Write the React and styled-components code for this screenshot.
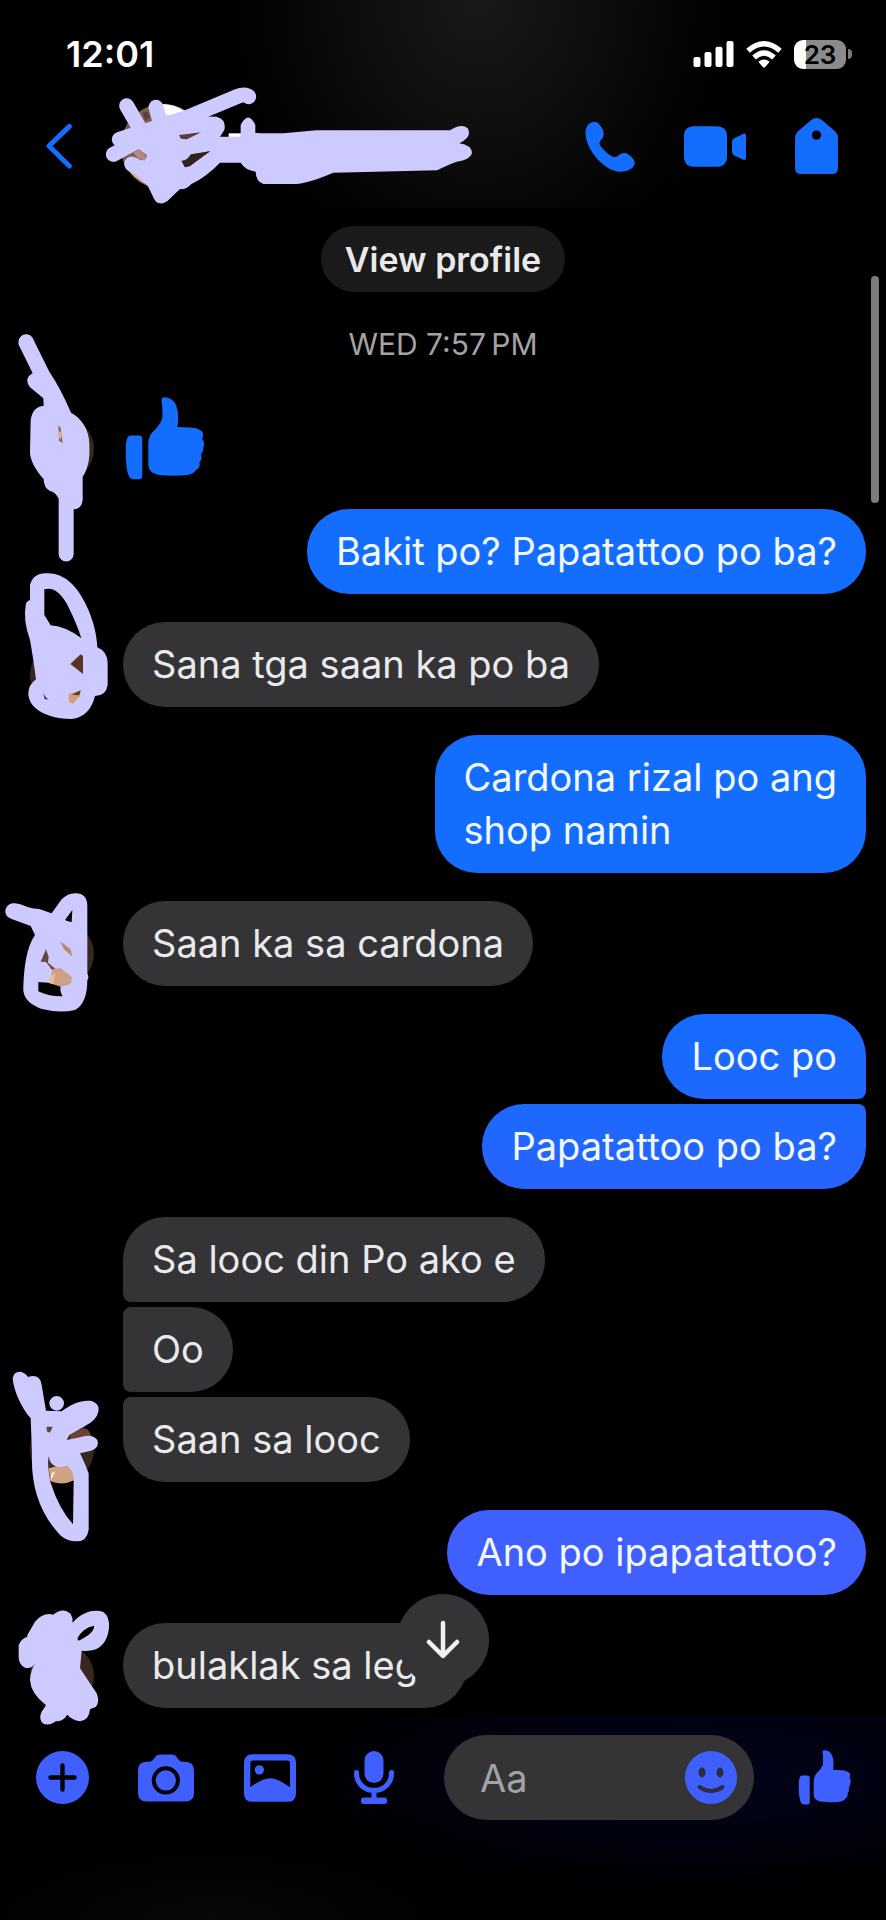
import React from "react";
import styled, { createGlobalStyle, css } from "styled-components";

const GlobalStyle = createGlobalStyle`
  *, *::before, *::after { box-sizing: border-box; }
  body {
    margin: 0;
    background: #000;
    color: #e9e9ec;
    font-family: Inter, "Liberation Sans", sans-serif;
  }
  button {
    border: 0;
    padding: 0;
    background: none;
    color: inherit;
    font: inherit;
    cursor: pointer;
  }
  svg { display: block; }
`;

const INK = "#cdcaff";

const Screen = styled.div`
  display: flex;
  flex-direction: column;
  min-height: 100vh;
  background: #000;
`;

const Top = styled.header`
  background: radial-gradient(ellipse 260px 300px at 54% 0, #191919 0%, #0e0e0f 45%, #040405 80%, #000 100%);
`;

const StatusBar = styled.div`
  display: flex;
  align-items: center;
  justify-content: space-between;
  height: 84px;
  padding: 24px 34px 0 66px;
`;

const Clock = styled.time`
  color: #fff;
  font-size: 36px;
  font-weight: 600;
  line-height: 40px;
`;

const StatusIcons = styled.div`
  display: flex;
  align-items: center;
  gap: 12px;
`;

const BatteryWrap = styled.div`
  display: flex;
  align-items: center;
  gap: 2px;
`;

const Battery = styled.div`
  width: 52px;
  height: 29px;
  border-radius: 9px;
  background: linear-gradient(90deg, #fff 23%, #8b8b8b 23%);
  color: #000;
  font-size: 26px;
  font-weight: 600;
  line-height: 29px;
  text-align: center;
`;

const BatteryTip = styled.span`
  width: 4px;
  height: 10px;
  border-radius: 0 4px 4px 0;
  background: #7b7b7b;
`;

const ChatBar = styled.div`
  display: flex;
  align-items: center;
  height: 124px;
  padding: 0 48px 0 46px;
`;

const Contact = styled.div`
  flex: 1;
  margin-left: 28px;
`;

const IconButton = styled.button`
  display: grid;
  place-items: center;
  flex: none;
  color: ${(p) => p.$color || "#136dff"};
  width: ${(p) => (p.$cell ? p.$cell + "px" : "auto")};
`;

const Actions = styled.nav`
  display: flex;
  align-items: center;
  gap: 49px;
`;

const Thread = styled.main`
  position: relative;
  z-index: 1;
  display: flex;
  flex: 1;
  flex-direction: column;
  align-items: center;
  padding: 18px 20px 7px 30px;
`;

const ProfileButton = styled.button`
  height: 66px;
  padding: 0 24px;
  margin-right: 10px;
  border-radius: 33px;
  background: #1a1a1a;
  font-size: 34px;
  font-weight: 600;
`;

const Stamp = styled.time`
  margin: 34px 10px 34px 0;
  color: #a3a3a6;
  font-size: 30px;
  line-height: 36px;
`;

const Messages = styled.ol`
  display: flex;
  flex-direction: column;
  gap: 28px;
  align-self: stretch;
  margin: 0;
  padding: 0;
  list-style: none;
`;

const Group = styled.li`
  display: flex;
  align-items: flex-end;
  gap: 29px;
  justify-content: ${(p) => (p.$mine ? "flex-end" : "flex-start")};
`;

const Stack = styled.div`
  display: flex;
  flex-direction: column;
  gap: 5px;
  align-items: ${(p) => (p.$mine ? "flex-end" : "flex-start")};
`;

const joined = css`
  ${(p) => p.$joinTop && (p.$mine ? "border-top-right-radius: 8px;" : "border-top-left-radius: 8px;")}
  ${(p) => p.$joinBottom && (p.$mine ? "border-bottom-right-radius: 8px;" : "border-bottom-left-radius: 8px;")}
`;

const Bubble = styled.p`
  margin: 0;
  padding: 16px 29px;
  border-radius: 42px;
  background: ${(p) => p.$tone || "#343436"};
  color: ${(p) => (p.$mine ? "#f1f8ff" : "#e9e9ec")};
  font-size: 38px;
  line-height: 53px;
  white-space: pre-line;
  ${joined}
`;

const LikeMessage = styled.div`
  display: flex;
  align-items: flex-end;
  height: 85px;
  padding: 0 2px 1px;
  color: #136dff;
`;

const AvatarArt = styled.svg`
  flex: none;
  overflow: visible;
`;

const ScrollThumb = styled.span`
  position: absolute;
  top: 68px;
  right: 7px;
  width: 8px;
  height: 227px;
  border-radius: 4px;
  background: #7d7d7d;
`;

const Composer = styled.form`
  display: flex;
  align-items: center;
  gap: 42px;
  padding: 20px 34px 100px;
  background:
    radial-gradient(ellipse 46% 120px at 78% 60px, #02031a 0%, #01020f 55%, transparent 100%),
    radial-gradient(ellipse 260px 80px at 24% 100%, #090707 0%, transparent 100%),
    #000;
`;

const Tools = styled.div`
  display: flex;
  align-items: center;
  gap: 48px;
`;

const Field = styled.label`
  display: flex;
  flex: 1;
  align-items: center;
  min-width: 0;
  height: 85px;
  padding: 0 17px 0 36px;
  border-radius: 43px;
  background: #343436;
`;

const TextInput = styled.input`
  flex: 1;
  min-width: 0;
  border: 0;
  outline: 0;
  padding: 0;
  background: none;
  color: #e9e9ec;
  font-family: inherit;
  font-size: 38px;
  &::placeholder { color: #a3a3a6; opacity: 1; }
`;

const JumpButton = styled.button`
  position: absolute;
  bottom: 29px;
  left: calc(50% - 46px);
  display: grid;
  place-items: center;
  width: 92px;
  height: 92px;
  border-radius: 50%;
  background: #343436;
  color: #f1f1f3;
`;

function ThumbIcon({ width, height }) {
  return (
    <svg width={width} height={height} viewBox="376 260 238 250" fill="currentColor" aria-hidden="true">
      <path d="M392 376H418Q428 376 428 386V498Q428 508 418 508H398Q386 506 381 475Q376 440 379 400Q382 376 392 376Z" />
      <path d="M492 261Q518 260 530 285Q540 310 534 350L575 352Q608 356 611 370Q612 378 608 386Q617 396 613 408Q612 425 605 432Q610 446 600 458Q604 472 590 480Q585 490 565 495Q520 500 475 494Q446 488 446 465V400Q447 380 458 367Q482 345 488 325Q490 300 486 268Q487 262 492 261Z" />
    </svg>
  );
}

const scribbles = {
  first: {
    box: "90 321 192 192",
    ink: "M56 104C50 70 92 60 102 92L148 185Q182 235 213 308C245 325 270 360 268 410C270 450 262 480 248 500V570Q245 598 221 598V732A22 22 0 0 1 176 732V566Q165 545 150 543Q132 535 131 508Q90 460 90 425L92 330Q98 290 131 287L130 265L90 232Q70 205 98 190Z",
    over: [
      ["M175 345L182 354L188 400L177 392Z", "#8a665c"],
      ["M176 362L186 368L183 388L177 384Z", "#e2b08c"],
    ],
  },
  second: {
    box: "90 249 192 192",
    ink: "M90 75Q100 38 140 40C190 38 225 75 245 110C275 160 290 215 292 262Q323 275 323 310V375Q318 408 285 408Q270 470 215 477C150 478 85 450 85 400Q85 375 108 358L100 300L90 240Q68 180 78 130Q82 122 90 120ZM133 88Q172 76 205 140Q232 195 244 235Q200 200 152 196L133 165Z",
    over: [
      ["M211 312L242 283L249 288V342Z", "#5d3222"],
      ["M206 402L242 391L240 408L218 432L206 424Z", "#d79c79"],
      ["M215 404L242 391L238 406Z", "#5b3b30"],
      ["M129 395Q132 408 146 419L134 417Z", "#333"],
    ],
  },
  third: {
    box: "90 126 192 192",
    ink: "M38 70Q55 68 75 78Q100 88 112 86Q125 88 155 100L185 58Q205 38 228 40Q260 40 262 75V280Q268 295 262 300Q262 370 225 390Q180 400 130 388C80 372 68 345 70 320C72 260 80 200 105 165L92 138L35 117Q14 108 16 92Q20 72 38 70ZM217 90L195 120Q210 126 215 126Z",
    over: [
      ["M115 306L145 308L182 318Q178 332 188 349Q145 350 115 334Z", "#030303"],
      ["M122 245L138 208L146 230L144 248L168 268L158 272L138 246Z", "#67483f"],
      ["M158 267L182 264L216 292L212 312L182 320L146 308Z", "#cfa085"],
      ["M150 288L166 280L160 312L146 308Z", "#e8c094"],
      ["M180 184L212 208L217 230L192 208Z", "#b98972"],
    ],
  },
  fourth: {
    box: "90 234 192 192",
    under: [
      ["M210 285Q245 260 262 268Q278 285 276 305H210Z", "#6b4332"],
      ["M146 385Q185 370 225 385V420Q186 438 152 424Z", "#d1a184"],
    ],
    ink: "M38 115Q42 92 65 96Q78 100 84 111Q120 100 125 135L138 212L185 214C215 190 250 178 275 183Q300 192 295 215Q290 240 255 258L208 285L200 300L240 292Q275 280 292 300Q300 325 270 333L240 340Q255 370 266 400V570Q260 605 230 604Q200 604 180 585C120 520 92 440 96 340L92 235C65 205 40 150 38 115ZM147 347Q146 372 172 382Q200 376 205 380Q222 395 221 420L219 553Q176 505 152 428Q140 370 147 347ZM148 190A22 22 0 1 1 192 190A22 22 0 1 1 148 190Z",
    over: [
      ["M140 260L158 260L150 278L140 274Z", "#554640"],
      ["M154 400L166 394L152 422Z", "#fff0d0"],
    ],
  },
  fifth: {
    box: "90 162 192 192",
    ink: "M82 135L105 95Q130 65 160 74Q190 50 212 72Q220 85 218 98C250 62 285 58 310 66Q330 80 327 115Q318 185 255 183L245 182L240 235L290 310Q300 335 288 350L270 358Q268 390 240 394Q215 390 202 374Q190 394 168 394Q145 410 128 400Q115 385 125 365L138 346Q92 310 90 270Q92 240 106 218Q95 238 75 233Q55 222 56 200V165Q64 145 82 140ZM232 146Q245 115 282 107Q285 128 236 152Z",
  },
};

function Avatar({ art }) {
  const { box, ink, under = [], over = [] } = scribbles[art];
  const [x, y] = box.split(" ").map(Number);
  return (
    <AvatarArt width="64" height="64" viewBox={box} aria-hidden="true">
      <circle cx={x + 96} cy={y + 96} r="96" fill="#38261f" />
      {under.map(([d, fill]) => <path key={d} d={d} fill={fill} />)}
      <path d={ink} fill={INK} fillRule="evenodd" />
      {over.map(([d, fill]) => <path key={d} d={d} fill={fill} />)}
    </AvatarArt>
  );
}

function ContactArt() {
  return (
    <svg width="380" height="124" viewBox="300 252 1140 372" role="img" aria-label="Contact">
      <circle cx="490" cy="440" r="128" fill="#80594e" />
      <path d="M480 312Q520 310 556 334L540 360L500 352Z" fill="#fff" />
      <path d="M378 500Q410 550 480 568L478 555L400 505Z" fill="#d8b6a4" />
      <path d="M686 400H779V420H686Z" fill="#fff" />
      <g fill="none" stroke={INK} strokeWidth="45" strokeLinecap="round" strokeLinejoin="round">
        <path d="M380 317L425 395" />
        <path d="M468 322L490 400" />
        <path d="M746 290Q735 280 710 290L560 353L358 418" />
        <path d="M340 463L420 420L560 380L650 375" />
        <path d="M395 492L450 520L483 588L540 535" />
      </g>
      <path
        fill={INK}
        fillRule="evenodd"
        d="M372 400L500 345L650 350Q680 360 673 390L660 410H722V375Q745 330 766 375V400H850L950 391H1350Q1385 368 1403 385Q1418 410 1378 430Q1415 435 1416 460Q1410 480 1370 485Q1330 500 1312 511L1220 513L1000 518Q920 552 880 552H790Q768 545 767 515Q735 510 722 488H660Q620 530 573 553Q560 570 540 567L500 605L430 545L372 490Q385 478 420 482Q445 475 440 465L412 445L400 425ZM537 405L603 397L560 418L543 416ZM543 482Q555 492 570 464L630 454L570 498L555 502Z"
      />
      <path d="M429 340L440 334L450 350L436 362Z" fill="#583d42" />
      <path d="M537 405L603 397L560 418L543 416Z" fill="#5b3f3a" />
      <path d="M545 482Q562 482 574 463L630 454L570 498L555 502Z" fill="#30221f" />
      <path d="M400 458L416 446L438 468L434 482L412 474Z" fill="#b18a7c" />
    </svg>
  );
}

const messages = [
  { mine: true, items: [["Bakit po? Papatattoo po ba?", "#136dff"]] },
  { art: "second", items: [["Sana tga saan ka po ba"]] },
  { mine: true, items: [["Cardona rizal po ang\nshop namin", "#136dff"]] },
  { art: "third", items: [["Saan ka sa cardona"]] },
  {
    mine: true,
    items: [
      ["Looc po", "linear-gradient(#156bff, #1e68ff)"],
      ["Papatattoo po ba?", "linear-gradient(#1b69ff, #2864ff)"],
    ],
  },
  { art: "fourth", items: [["Sa looc din Po ako e"], ["Oo"], ["Saan sa looc"]] },
  { mine: true, items: [["Ano po ipapatattoo?", "#405fff"]] },
  { art: "fifth", items: [["bulaklak sa legs"]] },
];

const ACCENT = "#405fff";

export default function App() {
  return (
    <Screen>
      <GlobalStyle />
      <Top>
        <StatusBar>
          <Clock>12:01</Clock>
          <StatusIcons>
            <svg width="41" height="26" viewBox="582 124 120 78" fill="#fff" aria-hidden="true">
              <rect x="582" y="172" width="21" height="30" rx="6" />
              <rect x="615" y="157" width="21" height="45" rx="6" />
              <rect x="648" y="141" width="21" height="61" rx="6" />
              <rect x="681" y="124" width="21" height="78" rx="6" />
            </svg>
            <svg width="36" height="27" viewBox="738 122 108 80" fill="none" stroke="#fff" strokeWidth="16" aria-hidden="true">
              <path d="M744 151Q792 109 840 151" />
              <path d="M762 171Q792 144 822 171" />
              <path d="M775 184Q792 170 809 184L795 200Q792 202 789 200Z" fill="#fff" stroke="none" />
            </svg>
            <BatteryWrap>
              <Battery>23</Battery>
              <BatteryTip />
            </BatteryWrap>
          </StatusIcons>
        </StatusBar>
        <ChatBar>
          <IconButton type="button" aria-label="Back">
            <svg width="26" height="46" viewBox="138 368 78 138" fill="none" stroke="currentColor" strokeWidth="15" strokeLinecap="round" strokeLinejoin="round">
              <path d="M208 378L147 437L208 497" />
            </svg>
          </IconButton>
          <Contact>
            <ContactArt />
          </Contact>
          <Actions aria-label="Chat actions">
            <IconButton type="button" aria-label="Call">
              <svg width="50" height="51" viewBox="252 362 150 154" fill="currentColor">
                <path d="M262 372Q275 360 290 367Q308 385 308 402Q308 412 298 422Q292 430 300 440Q318 462 335 470Q343 474 352 466Q362 456 375 459Q392 466 401 484Q404 494 395 503Q378 517 352 515Q320 510 290 478Q255 440 253 400Q253 382 262 372Z" />
              </svg>
            </IconButton>
            <IconButton type="button" aria-label="Video call">
              <svg width="62" height="41" viewBox="546 378 186 122" fill="currentColor">
                <rect x="546" y="378" width="129" height="122" rx="27" />
                <path d="M690 425Q690 418 697 414L724 401Q732 398 732 407V472Q732 482 724 479L697 466Q690 462 690 455Z" />
              </svg>
            </IconButton>
            <IconButton type="button" aria-label="Label">
              <svg width="43" height="56" viewBox="886 352 128 167" fill="currentColor">
                <path fillRule="evenodd" d="M934 358Q950 346 966 358L1006 392Q1014 400 1014 412V500Q1014 519 996 519H904Q886 519 886 500V412Q886 400 894 392ZM936 403A14 14 0 1 0 964 403A14 14 0 1 0 936 403Z" />
              </svg>
            </IconButton>
          </Actions>
        </ChatBar>
      </Top>

      <Thread>
        <ProfileButton type="button">View profile</ProfileButton>
        <Stamp>WED 7:57{"\u2009"}PM</Stamp>
        <Messages>
          <Group>
            <Avatar art="first" />
            <LikeMessage role="img" aria-label="Thumbs up">
              <ThumbIcon width={79} height={83} />
            </LikeMessage>
          </Group>
          {messages.map(({ mine, art, items }, i) => (
            <Group key={i} $mine={mine}>
              {art && <Avatar art={art} />}
              <Stack $mine={mine}>
                {items.map(([text, tone], n) => (
                  <Bubble key={text} $mine={mine} $tone={tone} $joinTop={n > 0} $joinBottom={n < items.length - 1}>
                    {text}
                  </Bubble>
                ))}
              </Stack>
            </Group>
          ))}
        </Messages>
        <ScrollThumb />
        <JumpButton type="button" aria-label="Jump to latest">
          <svg width="34" height="40" viewBox="0 0 34 40" fill="none" stroke="currentColor" strokeWidth="4.5" strokeLinecap="round" strokeLinejoin="round">
            <path d="M17 3V36M3 22L17 36L31 22" />
          </svg>
        </JumpButton>
      </Thread>

      <Composer onSubmit={(e) => e.preventDefault()}>
        <Tools>
          <IconButton type="button" aria-label="More" $color={ACCENT} $cell={56}>
            <svg width="53" height="53" viewBox="105 484 158 158">
              <circle cx="184" cy="563" r="79" fill="currentColor" />
              <path d="M148 563H220M184 527V599" stroke="#000" strokeWidth="13" strokeLinecap="round" />
            </svg>
          </IconButton>
          <IconButton type="button" aria-label="Camera" $color={ACCENT} $cell={56}>
            <svg width="56" height="48" viewBox="411 491 171 143">
              <path fill="currentColor" d="M436 513H446Q455 512 460 503Q467 491 480 491H514Q526 491 532 503Q538 512 546 513H556Q582 514 582 538V608Q582 634 556 634H437Q411 634 411 608V538Q411 514 436 513Z" />
              <circle cx="496" cy="570" r="37" fill="none" stroke="#000" strokeWidth="12" />
            </svg>
          </IconButton>
          <IconButton type="button" aria-label="Photos" $color={ACCENT} $cell={56}>
            <svg width="52" height="48" viewBox="729 491 156 143" fill="currentColor">
              <path fillRule="evenodd" d="M755 491H859Q885 491 885 517V608Q885 634 859 634H755Q729 634 729 608V517Q729 491 755 491ZM756 510Q748 510 748 518V590Q785 563 807 563Q830 563 867 590V518Q867 510 859 510Z" />
              <circle cx="775" cy="538" r="14" />
            </svg>
          </IconButton>
          <IconButton type="button" aria-label="Voice message" $color={ACCENT} $cell={56}>
            <svg width="40" height="53" viewBox="0 0 80 106" fill="currentColor">
              <rect x="21" y="0" width="38" height="64" rx="19" />
              <path d="M5 43V44C5 66 22 79 40 79S75 66 75 44V43M40 78V98" fill="none" stroke="currentColor" strokeWidth="10" strokeLinecap="round" />
              <rect x="14" y="93" width="52" height="13" rx="5" />
            </svg>
          </IconButton>
        </Tools>
        <Field>
          <TextInput type="text" placeholder="Aa" aria-label="Message" />
          <IconButton type="button" aria-label="Emoji" $color={ACCENT}>
            <svg width="52" height="53" viewBox="0 0 104 106">
              <ellipse cx="52" cy="53" rx="52" ry="53" fill="currentColor" />
              <ellipse cx="34" cy="43" rx="7" ry="10" fill="#2c2d42" />
              <ellipse cx="70" cy="43" rx="7" ry="10" fill="#2c2d42" />
              <path d="M29 72Q52 88 75 72" fill="none" stroke="#2c2d42" strokeWidth="8" strokeLinecap="round" />
            </svg>
          </IconButton>
        </Field>
        <IconButton type="button" aria-label="Send like" $color={ACCENT} $cell={56}>
          <ThumbIcon width={53} height={55} />
        </IconButton>
      </Composer>
    </Screen>
  );
}
